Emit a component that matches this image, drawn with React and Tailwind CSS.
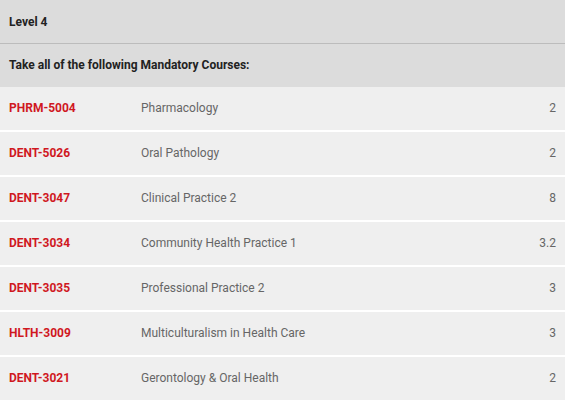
const COURSES = [
  { code: 'PHRM-5004', title: 'Pharmacology', credits: '2' },
  { code: 'DENT-5026', title: 'Oral Pathology', credits: '2' },
  { code: 'DENT-3047', title: 'Clinical Practice 2', credits: '8' },
  { code: 'DENT-3034', title: 'Community Health Practice 1', credits: '3.2' },
  { code: 'DENT-3035', title: 'Professional Practice 2', credits: '3' },
  { code: 'HLTH-3009', title: 'Multiculturalism in Health Care', credits: '3' },
  { code: 'DENT-3021', title: 'Gerontology & Oral Health', credits: '2' },
]

export default function App() {
  return (
    <div className="w-[565px] bg-white font-['Roboto',sans-serif] text-[12px]">
      {/* Level header */}
      <div className="h-[44px] bg-[#dcdcdc] border-b border-[#bcbcbc] flex items-center px-[9px] font-bold text-[#222]">
        Level 4
      </div>
      <div className="h-[43px] pb-[2px] bg-[#dcdcdc] flex items-center px-[9px] font-bold text-[#222]">
        Take all of the following Mandatory Courses:
      </div>

      <div className="flex flex-col gap-[2px]">
        {COURSES.map(c => (
          <div key={c.code} className="h-[43px] pb-[2px] bg-[#efefef] flex items-center px-[9px]">
            <span className="w-[132px] font-bold text-[#d0181f]">{c.code}</span>
            <span className="flex-1 text-[#666]">{c.title}</span>
            <span className="text-[#666]">{c.credits}</span>
          </div>
        ))}
      </div>
    </div>
  )
}
